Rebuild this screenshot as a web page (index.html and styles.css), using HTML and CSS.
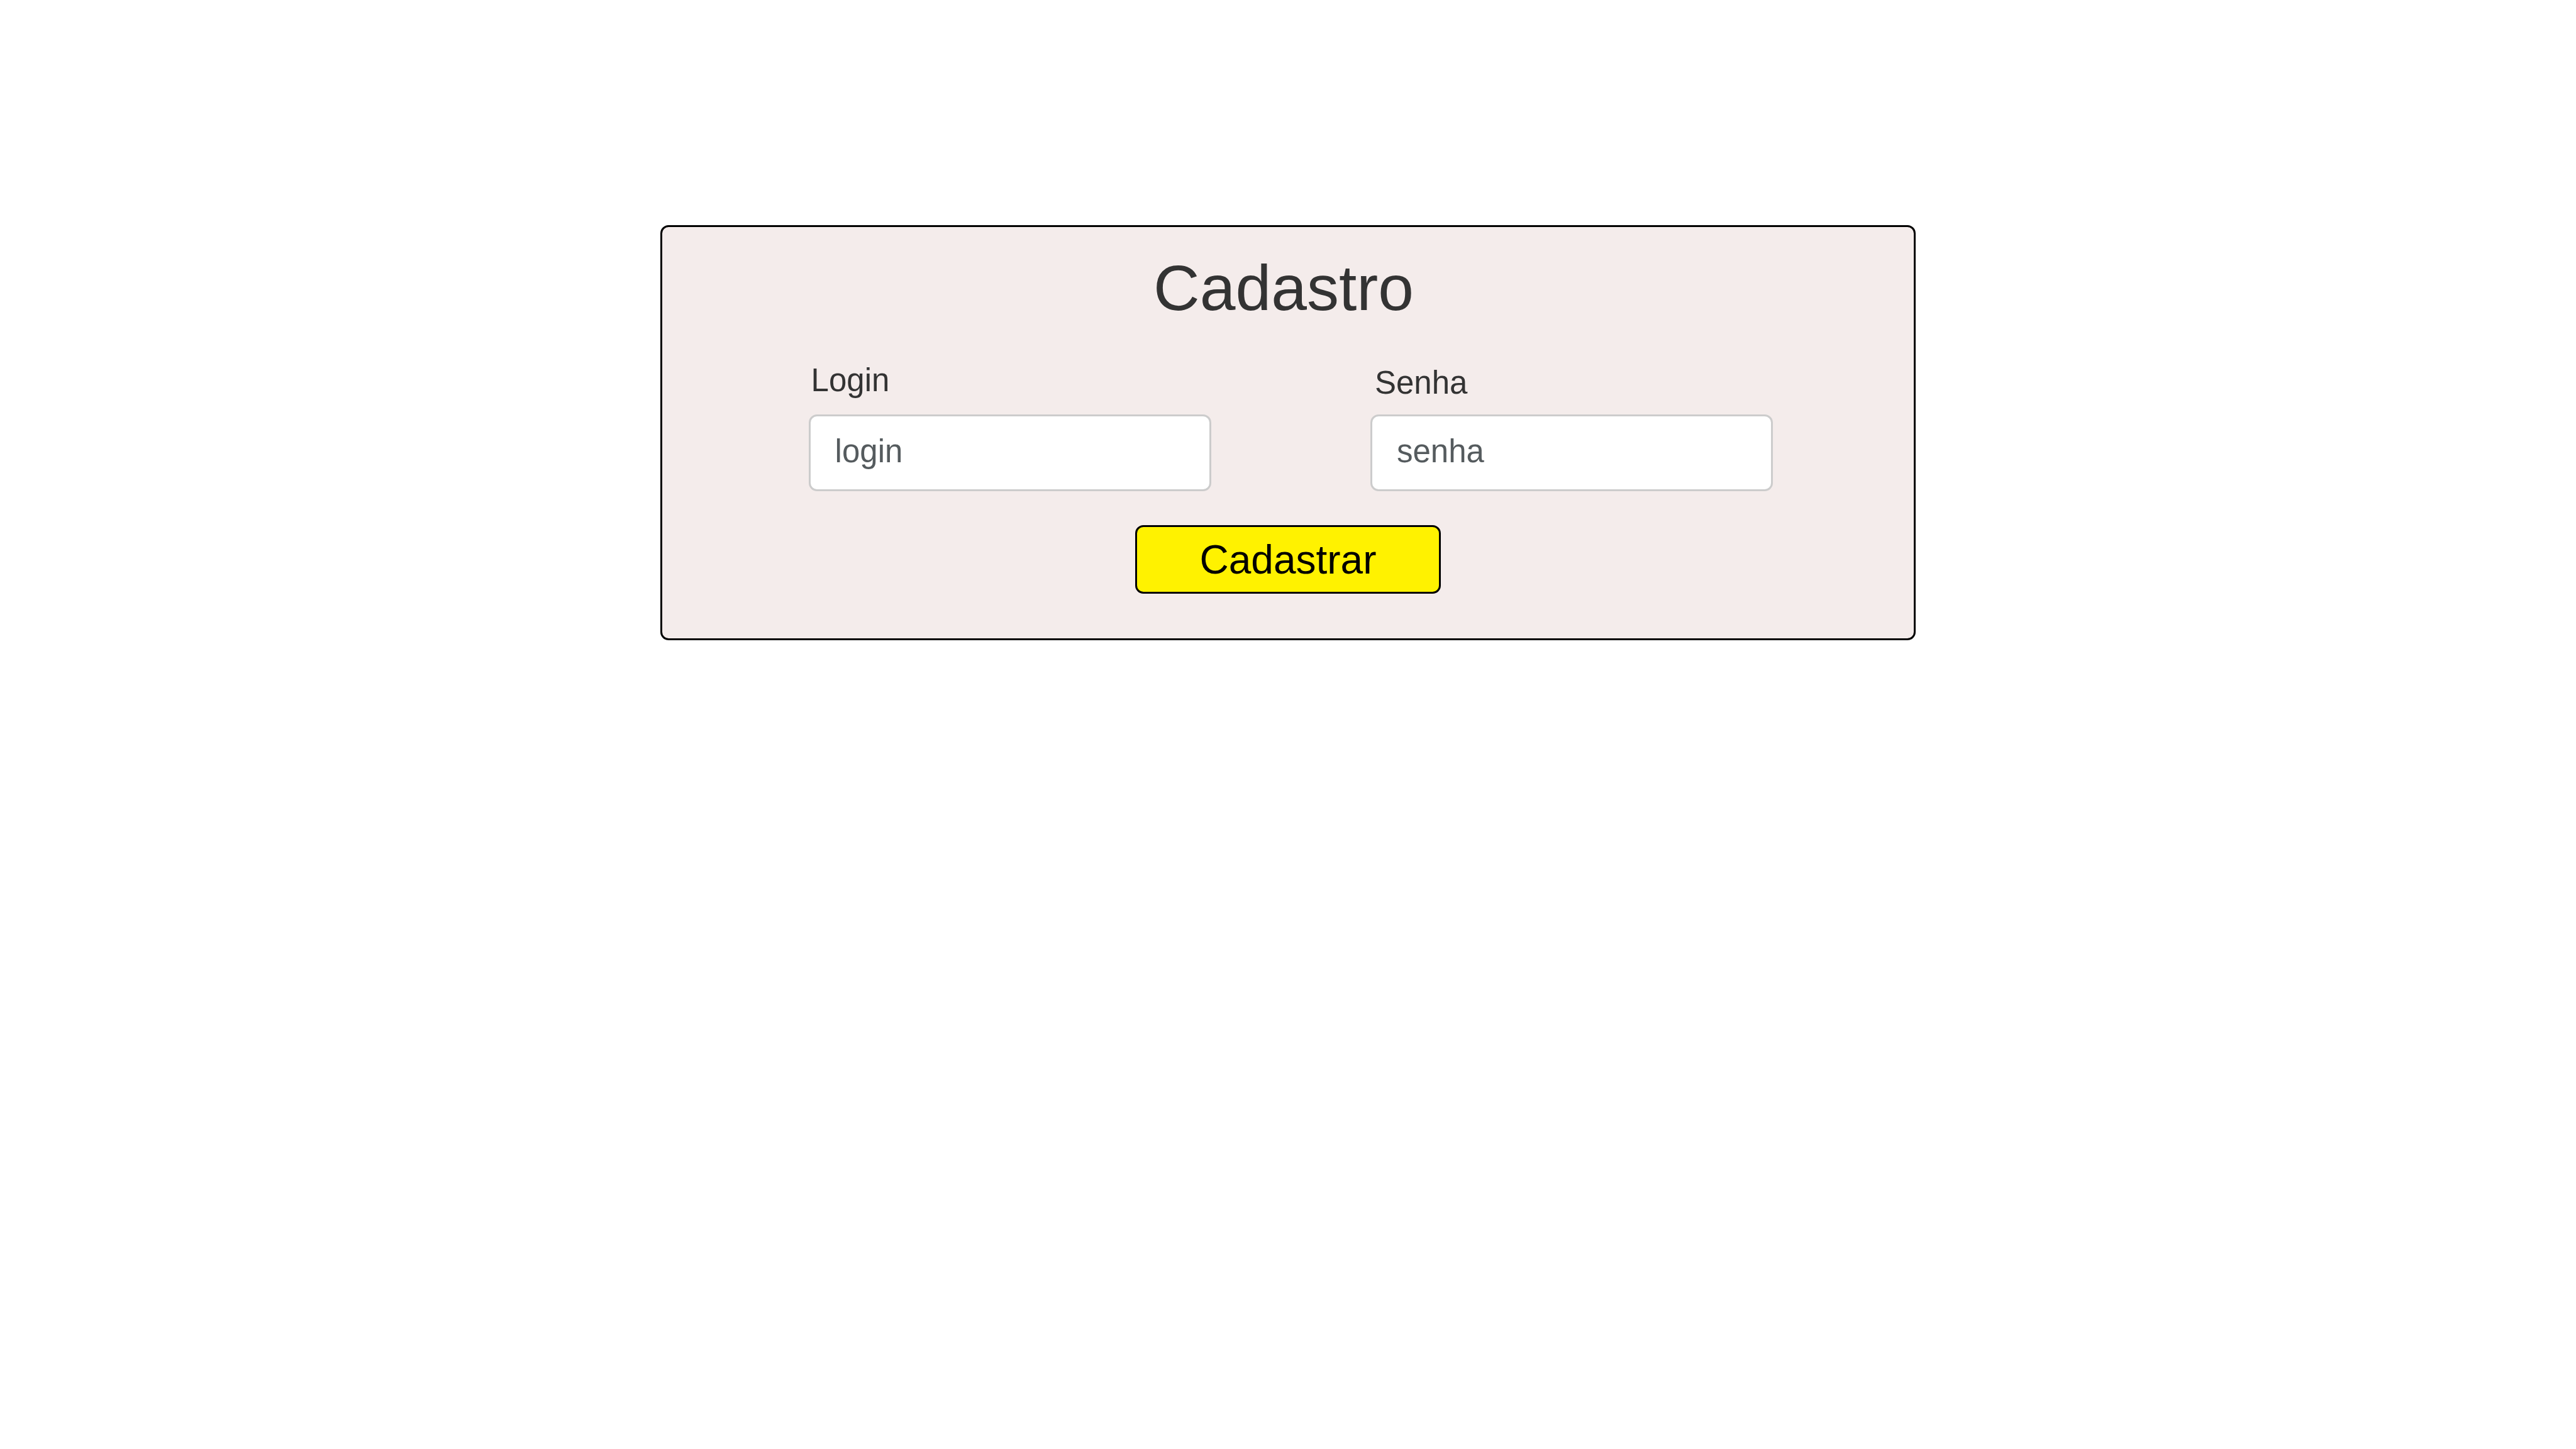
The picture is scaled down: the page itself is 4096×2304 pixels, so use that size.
FILE: index.html
```html
<!DOCTYPE html>
<html lang="pt-BR">
<head>
  <meta charset="utf-8">
  <meta name="viewport" content="width=device-width, initial-scale=1">
  <title>Cadastro</title>
  <link rel="stylesheet" href="styles.css">
</head>
<body>
  <main class="page">
    <form class="card">
      <h1 class="card-title">Cadastro</h1>
      <div class="fields">
        <div class="field">
          <label class="field-label" for="login">Login</label>
          <input class="field-input" id="login" name="login" type="text" placeholder="login">
        </div>
        <div class="field">
          <label class="field-label field-label-senha" for="senha">Senha</label>
          <input class="field-input" id="senha" name="senha" type="password" placeholder="senha">
        </div>
      </div>
      <button class="submit" type="submit">Cadastrar</button>
    </form>
  </main>
</body>
</html>
```
FILE: styles.css
```css
* {
  box-sizing: border-box;
}

body {
  margin: 0;
  background: #fff;
  color: #333;
  font-family: "Liberation Sans", Arial, sans-serif;
}

.page {
  display: flex;
  justify-content: center;
  padding-top: 358px;
}

.card {
  display: flex;
  flex-direction: column;
  align-items: center;
  width: 48.75%;
  padding: 41px 0 71px;
  border: 3px solid #000;
  border-radius: 13px;
  background: #f4eceb;
}

.card-title {
  margin: 0 0 61px;
  padding-right: 14px;
  font-size: 102px;
  font-weight: 400;
  line-height: 112px;
}

.fields {
  display: grid;
  grid-template-columns: 1fr 1fr;
  gap: 253px;
  width: 100%;
  padding: 0 224px 0 233px;
}

.field {
  display: flex;
  flex-direction: column;
  justify-content: space-between;
}

.field-label {
  margin-bottom: 24px;
  padding-left: 4px;
  font-size: 51px;
  line-height: 60px;
}

.field-label-senha {
  margin-bottom: 20px;
  padding: 4px 0 0 7px;
}

.field-input {
  width: 100%;
  height: 122px;
  padding: 0 39px 6px;
  border: 3px solid #ccc;
  border-radius: 13px;
  background: #fff;
  color: #555b5e;
  font-family: inherit;
  font-size: 51px;
}

.field-input::placeholder {
  color: #555b5e;
  opacity: 1;
}

.submit {
  width: 486px;
  height: 109px;
  margin-top: 54px;
  padding: 0;
  border: 3px solid #000;
  border-radius: 13px;
  background: #fff200;
  color: #000;
  font-family: inherit;
  font-size: 64px;
}
```
